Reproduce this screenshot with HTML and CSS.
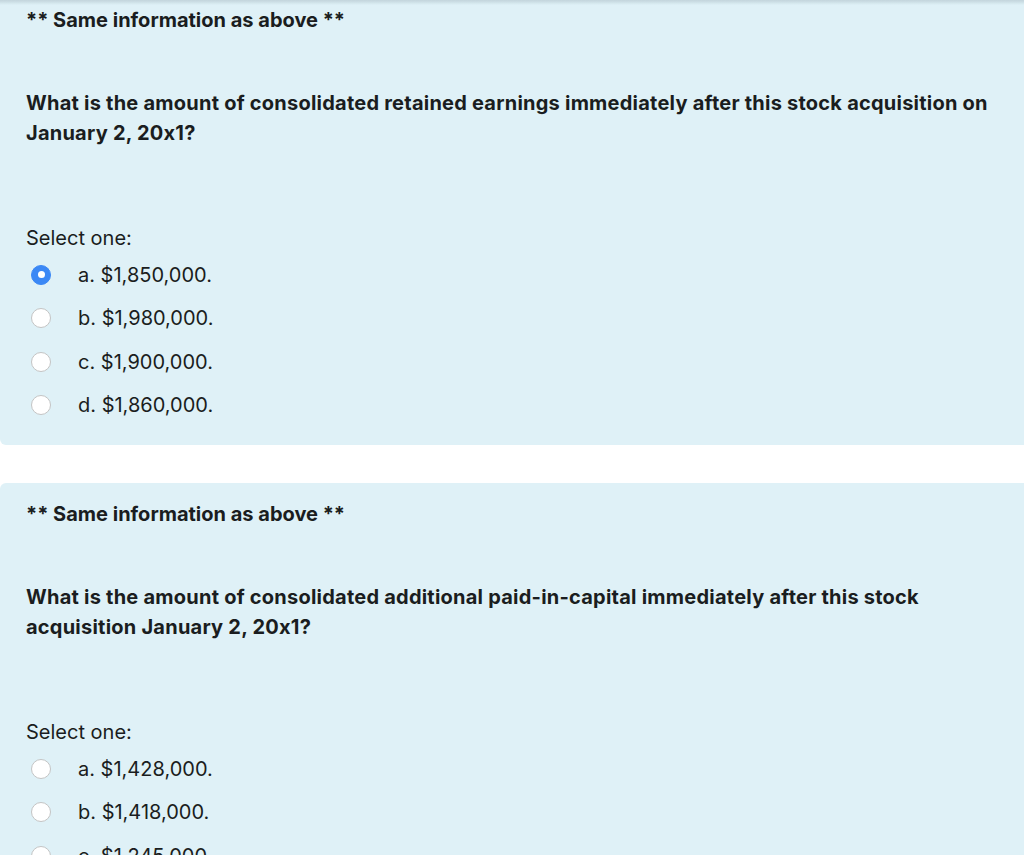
FILE: index.html
```html
<!DOCTYPE html>
<html lang="en">
<head>
<meta charset="utf-8">
<title>Quiz</title>
<link rel="stylesheet" href="styles.css">
</head>
<body>
<div class="page">
  <section class="que">
    <p class="qtext">** Same information as above **</p>
    <p class="qtext question">What is the amount of consolidated retained earnings immediately after this stock acquisition on<br>January 2, 20x1?</p>
    <p class="prompt">Select one:</p>
    <div class="answers">
      <label class="option"><span class="radio checked"></span><span class="otext">a. $1,850,000.</span></label>
      <label class="option"><span class="radio"></span><span class="otext">b. $1,980,000.</span></label>
      <label class="option"><span class="radio"></span><span class="otext">c. $1,900,000.</span></label>
      <label class="option"><span class="radio"></span><span class="otext">d. $1,860,000.</span></label>
    </div>
  </section>
  <section class="que">
    <p class="qtext">** Same information as above **</p>
    <p class="qtext question">What is the amount of consolidated additional paid-in-capital immediately after this stock<br>acquisition January 2, 20x1?</p>
    <p class="prompt">Select one:</p>
    <div class="answers">
      <label class="option"><span class="radio"></span><span class="otext">a. $1,428,000.</span></label>
      <label class="option"><span class="radio"></span><span class="otext">b. $1,418,000.</span></label>
      <label class="option"><span class="radio"></span><span class="otext">c. $1,245,000.</span></label>
      <label class="option"><span class="radio"></span><span class="otext">d. $1,250,000.</span></label>
    </div>
  </section>
</div>
</body>
</html>
```
FILE: styles.css
```css
html, body {
  margin: 0;
  padding: 0;
  background: #ffffff;
  overflow: hidden;
}
body {
  font-family: Inter, "Liberation Sans", sans-serif;
  font-feature-settings: "calt" 0;
  color: #1a1d20;
  font-size: 20px;
  line-height: 30px;
}
body::before {
  content: "";
  position: fixed;
  top: 0;
  left: 0;
  right: 0;
  height: 5px;
  background: linear-gradient(rgba(120, 140, 150, 0.28), rgba(120, 140, 150, 0));
  z-index: 5;
}
.page {
  width: 1060px;
  margin-top: -11px;
  display: flex;
  flex-direction: column;
  gap: 38px;
}
.que {
  background: #dff1f7;
  border-radius: 6px;
  padding: 16px 26px 18px 26px;
}
.qtext {
  margin: 0;
  font-weight: 700;
}
.question {
  margin-top: 53px;
  letter-spacing: 0.23px;
}
.prompt {
  margin: 75px 0 0 0;
}
.answers {
  display: flex;
  flex-direction: column;
}
.option {
  display: flex;
  align-items: center;
  height: 43.5px;
}
.radio {
  box-sizing: border-box;
  width: 20px;
  height: 20px;
  border-radius: 50%;
  background: #ffffff;
  border: 1px solid #c4c4c4;
  margin-left: 5px;
  margin-right: 27px;
  flex: none;
  display: flex;
  align-items: center;
  justify-content: center;
}
.radio.checked {
  background: #3b88f5;
  border-color: #3b88f5;
}
.radio.checked::after {
  content: "";
  width: 7px;
  height: 7px;
  border-radius: 50%;
  background: #ffffff;
}
```
